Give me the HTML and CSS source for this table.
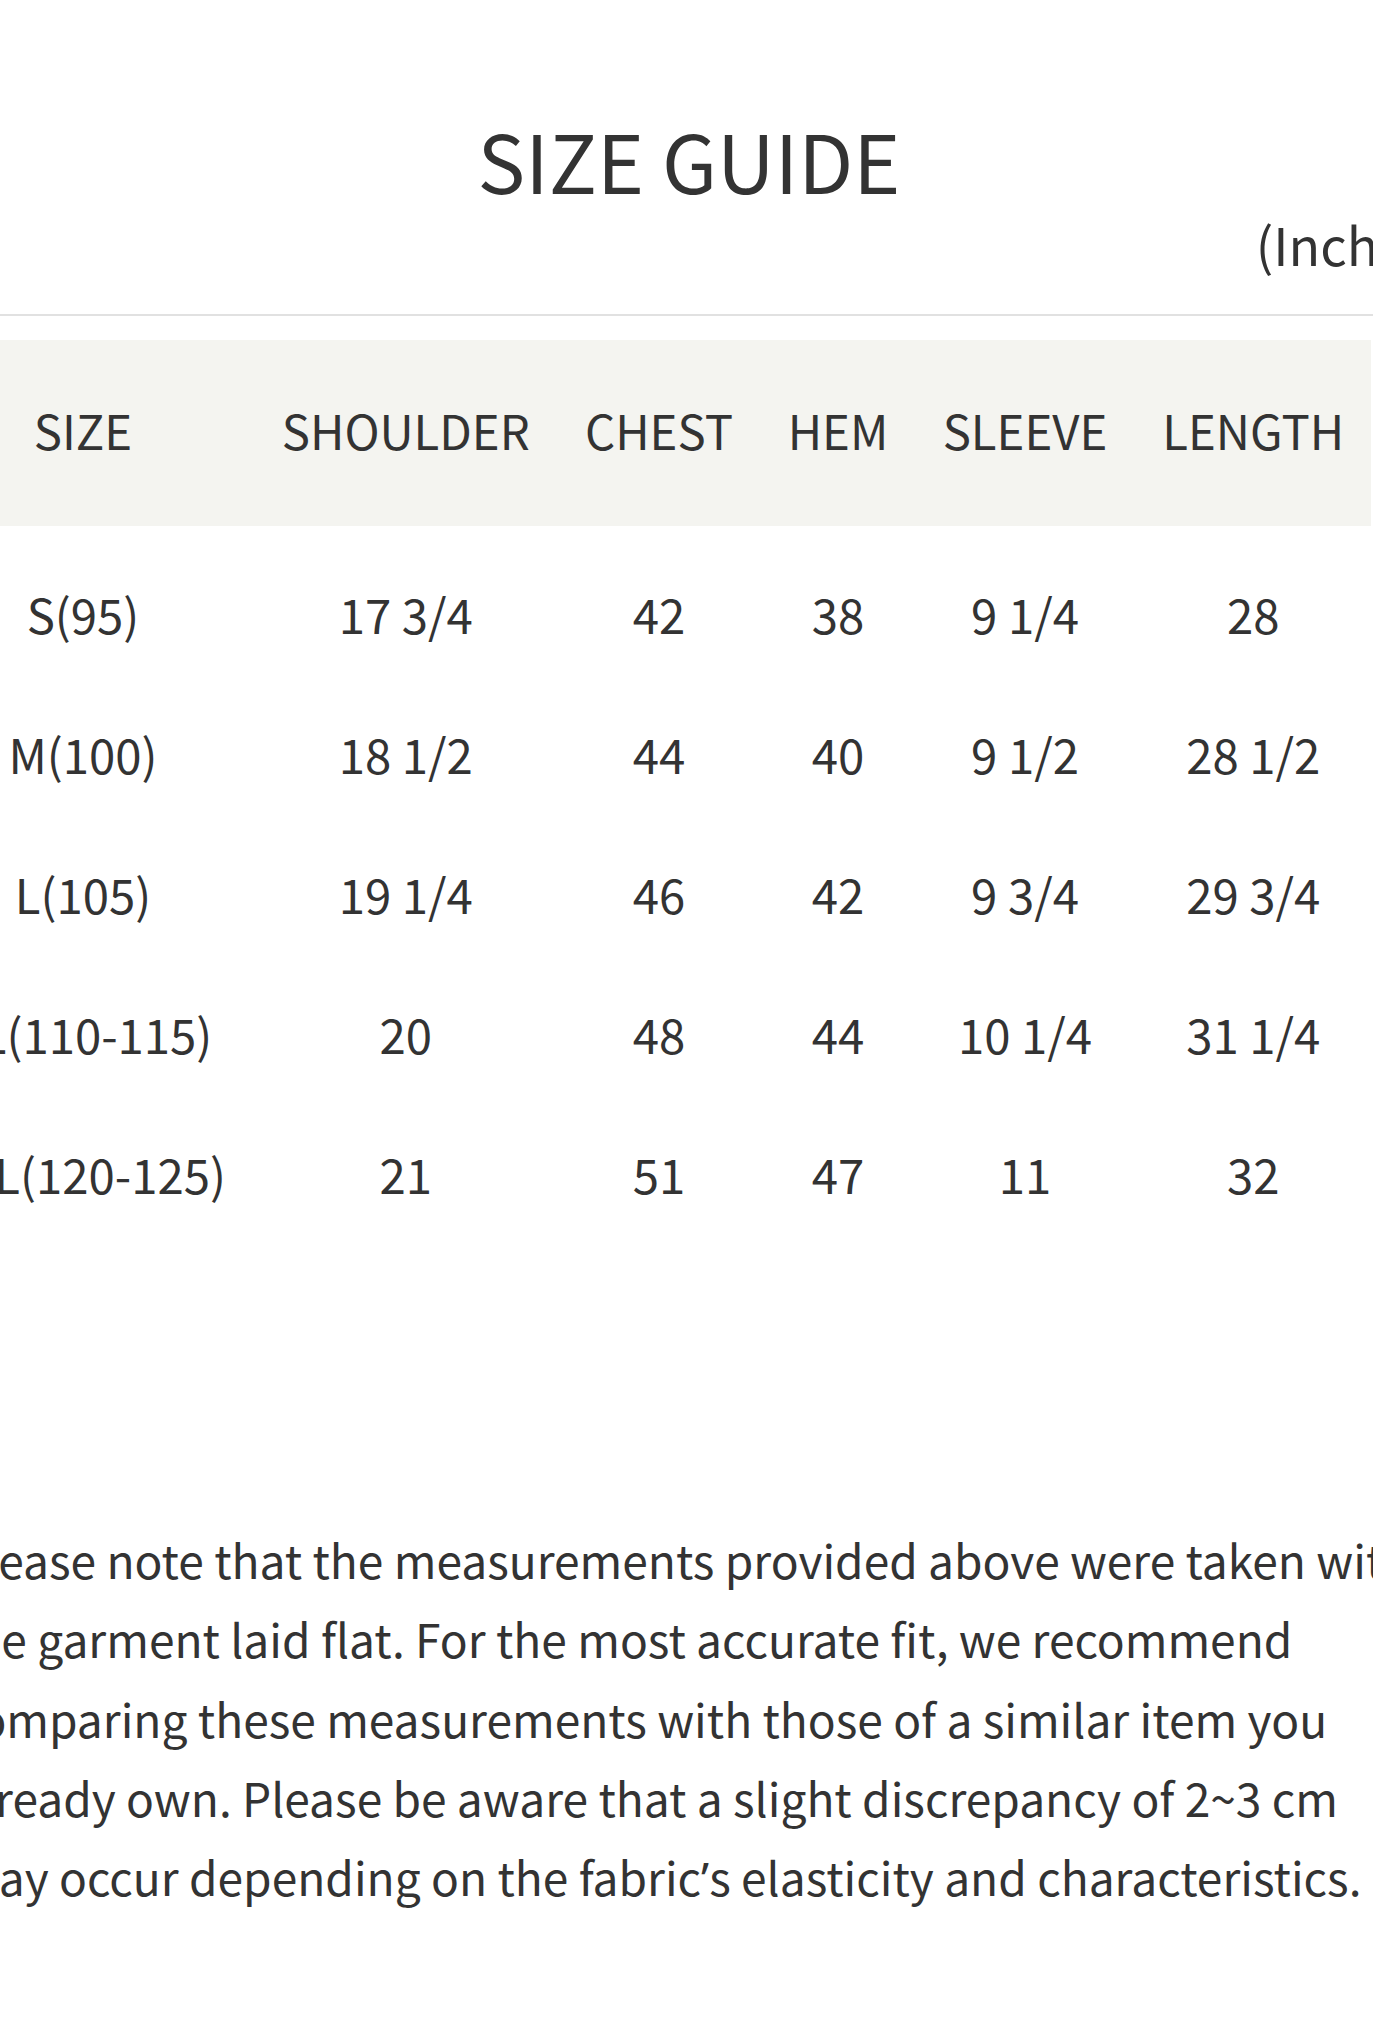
FILE: index.html
```html
<!DOCTYPE html>
<html lang="en">
<head>
<meta charset="utf-8">
<title>Size Guide</title>
<link rel="stylesheet" href="styles.css">
</head>
<body>
<div class="page">
  <h1 class="title">SIZE GUIDE</h1>
  <div class="unit">(Inches)</div>
  <div class="rule"></div>
  <div class="size-table">
    <div class="row head">
      <div class="cell">SIZE</div>
      <div class="cell">SHOULDER</div>
      <div class="cell">CHEST</div>
      <div class="cell">HEM</div>
      <div class="cell">SLEEVE</div>
      <div class="cell">LENGTH</div>
    </div>
    <div class="body">
      <div class="row">
        <div class="cell">S(95)</div>
        <div class="cell">17 3/4</div>
        <div class="cell">42</div>
        <div class="cell">38</div>
        <div class="cell">9 1/4</div>
        <div class="cell">28</div>
      </div>
      <div class="row">
        <div class="cell">M(100)</div>
        <div class="cell">18 1/2</div>
        <div class="cell">44</div>
        <div class="cell">40</div>
        <div class="cell">9 1/2</div>
        <div class="cell">28 1/2</div>
      </div>
      <div class="row">
        <div class="cell">L(105)</div>
        <div class="cell">19 1/4</div>
        <div class="cell">46</div>
        <div class="cell">42</div>
        <div class="cell">9 3/4</div>
        <div class="cell">29 3/4</div>
      </div>
      <div class="row">
        <div class="cell">XL(110-115)</div>
        <div class="cell">20</div>
        <div class="cell">48</div>
        <div class="cell">44</div>
        <div class="cell">10 1/4</div>
        <div class="cell">31 1/4</div>
      </div>
      <div class="row">
        <div class="cell">XXL(120-125)</div>
        <div class="cell">21</div>
        <div class="cell">51</div>
        <div class="cell">47</div>
        <div class="cell">11</div>
        <div class="cell">32</div>
      </div>
    </div>
  </div>
  <p class="note">Please note that the measurements provided above were taken with the garment laid flat. For the most accurate fit, we recommend comparing these measurements with those of a similar item you already own. Please be aware that a slight discrepancy of 2~3 cm may occur depending on the fabric<span class="apos">’</span>s elasticity and characteristics.</p>
</div>
</body>
</html>
```

FILE: styles.css
```css
html, body {
  margin: 0;
  padding: 0;
  background: #ffffff;
}
body {
  overflow: hidden;
  font-family: "Noto Sans CJK SC", "Noto Sans", sans-serif;
  color: #333333;
}
.page {
  width: 1578px;
  margin-left: -100px;
  padding-top: 109px;
}
.title {
  margin: 0;
  font-size: 80px;
  line-height: 100px;
  font-weight: 400;
  text-align: center;
}
.unit {
  font-size: 52px;
  line-height: 70px;
  text-align: right;
  padding-right: 29px;
}
.rule {
  margin-top: 35px;
  height: 2px;
  background: #e1e1e1;
}
.size-table {
  margin-top: 24px;
  margin-left: 11px;
  width: 1460px;
}
.row {
  display: grid;
  grid-template-columns: 344px 301.5px 205px 153px 221px 235.5px;
  height: 140px;
  align-items: center;
}
.head {
  height: 186px;
  background: #f4f4f0;
  padding-bottom: 7px;
  box-sizing: border-box;
}
.body {
  padding-top: 18px;
}
.cell {
  text-align: center;
  font-size: 47.3px;
  line-height: 47.3px;
  white-space: nowrap;
}
.note {
  margin: 276px 0 0 56px;
  width: 1462px;
  font-size: 46.1px;
  line-height: 79.3px;
}
.apos {
  font-family: "Noto Sans", "Open Sans", sans-serif;
}
```
